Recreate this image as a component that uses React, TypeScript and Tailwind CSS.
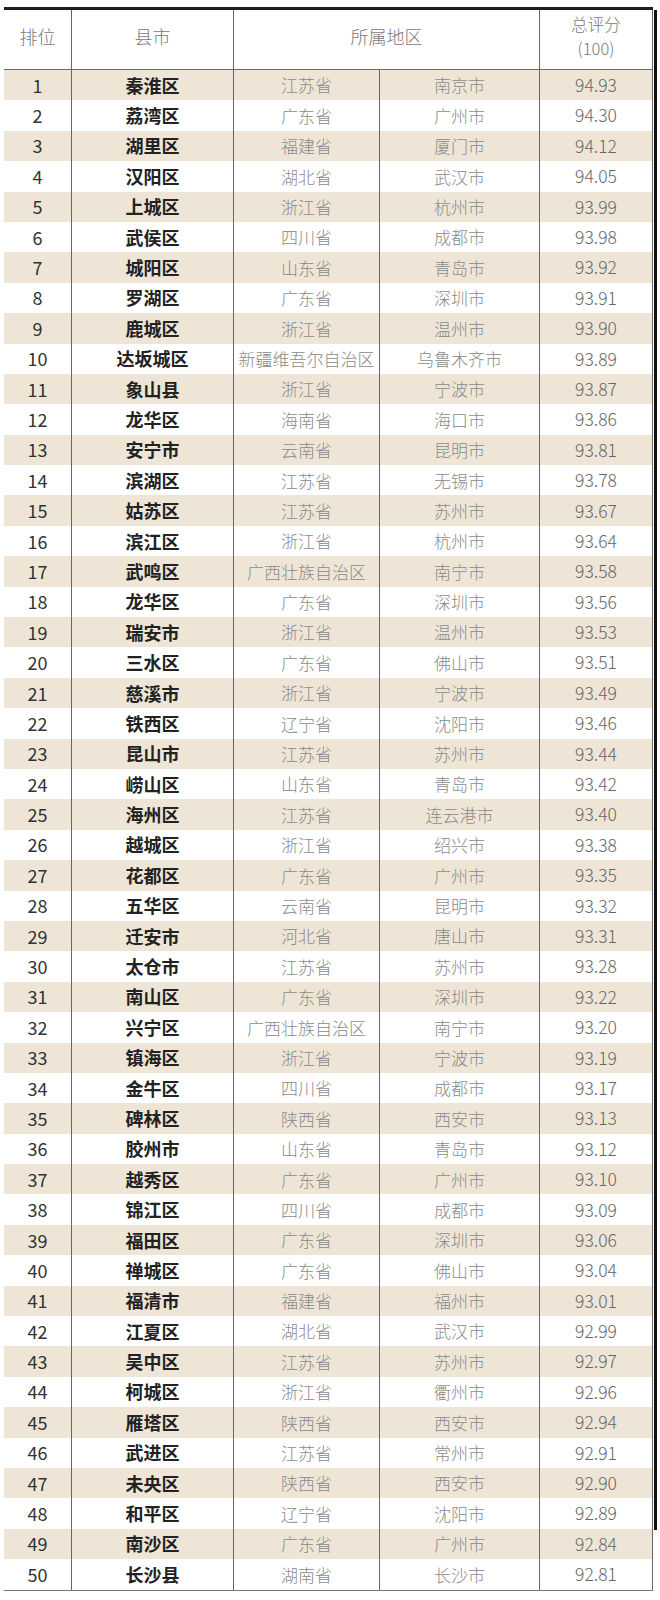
type Row = [number, string, string, string, string]

const rows: Row[] = [
  [1, '秦淮区', '江苏省', '南京市', '94.93'],
  [2, '荔湾区', '广东省', '广州市', '94.30'],
  [3, '湖里区', '福建省', '厦门市', '94.12'],
  [4, '汉阳区', '湖北省', '武汉市', '94.05'],
  [5, '上城区', '浙江省', '杭州市', '93.99'],
  [6, '武侯区', '四川省', '成都市', '93.98'],
  [7, '城阳区', '山东省', '青岛市', '93.92'],
  [8, '罗湖区', '广东省', '深圳市', '93.91'],
  [9, '鹿城区', '浙江省', '温州市', '93.90'],
  [10, '达坂城区', '新疆维吾尔自治区', '乌鲁木齐市', '93.89'],
  [11, '象山县', '浙江省', '宁波市', '93.87'],
  [12, '龙华区', '海南省', '海口市', '93.86'],
  [13, '安宁市', '云南省', '昆明市', '93.81'],
  [14, '滨湖区', '江苏省', '无锡市', '93.78'],
  [15, '姑苏区', '江苏省', '苏州市', '93.67'],
  [16, '滨江区', '浙江省', '杭州市', '93.64'],
  [17, '武鸣区', '广西壮族自治区', '南宁市', '93.58'],
  [18, '龙华区', '广东省', '深圳市', '93.56'],
  [19, '瑞安市', '浙江省', '温州市', '93.53'],
  [20, '三水区', '广东省', '佛山市', '93.51'],
  [21, '慈溪市', '浙江省', '宁波市', '93.49'],
  [22, '铁西区', '辽宁省', '沈阳市', '93.46'],
  [23, '昆山市', '江苏省', '苏州市', '93.44'],
  [24, '崂山区', '山东省', '青岛市', '93.42'],
  [25, '海州区', '江苏省', '连云港市', '93.40'],
  [26, '越城区', '浙江省', '绍兴市', '93.38'],
  [27, '花都区', '广东省', '广州市', '93.35'],
  [28, '五华区', '云南省', '昆明市', '93.32'],
  [29, '迁安市', '河北省', '唐山市', '93.31'],
  [30, '太仓市', '江苏省', '苏州市', '93.28'],
  [31, '南山区', '广东省', '深圳市', '93.22'],
  [32, '兴宁区', '广西壮族自治区', '南宁市', '93.20'],
  [33, '镇海区', '浙江省', '宁波市', '93.19'],
  [34, '金牛区', '四川省', '成都市', '93.17'],
  [35, '碑林区', '陕西省', '西安市', '93.13'],
  [36, '胶州市', '山东省', '青岛市', '93.12'],
  [37, '越秀区', '广东省', '广州市', '93.10'],
  [38, '锦江区', '四川省', '成都市', '93.09'],
  [39, '福田区', '广东省', '深圳市', '93.06'],
  [40, '禅城区', '广东省', '佛山市', '93.04'],
  [41, '福清市', '福建省', '福州市', '93.01'],
  [42, '江夏区', '湖北省', '武汉市', '92.99'],
  [43, '吴中区', '江苏省', '苏州市', '92.97'],
  [44, '柯城区', '浙江省', '衢州市', '92.96'],
  [45, '雁塔区', '陕西省', '西安市', '92.94'],
  [46, '武进区', '江苏省', '常州市', '92.91'],
  [47, '未央区', '陕西省', '西安市', '92.90'],
  [48, '和平区', '辽宁省', '沈阳市', '92.89'],
  [49, '南沙区', '广东省', '广州市', '92.84'],
  [50, '长沙县', '湖南省', '长沙市', '92.81'],
]

const cell = 'flex items-center justify-center whitespace-nowrap'

export default function App() {
  return (
    <div className="min-h-[1600px] bg-white pt-[7px] pl-[4px] font-['Noto_Sans_CJK_SC',sans-serif]">
      <div className="flex">
        <div className="w-[649px] border-t-[3px] border-[#1e1e1e]">
          {/* header */}
          <div className="flex h-[60px] border-b border-[#6e6b62] text-[18px] font-light text-[#787878]">
            <div className={`${cell} w-[67px] pb-[6px]`}>排位</div>
            <div className={`${cell} w-[162px] border-l border-[#666] pb-[6px]`}>县市</div>
            <div className={`${cell} w-[306px] border-l border-[#666] pb-[6px]`}>所属地区</div>
            <div className={`${cell} w-[114px] flex-col border-x border-[#666] pb-[8px] text-[16.5px] leading-[24px]`}>
              <span>总评分</span>
              <span>(100)</span>
            </div>
          </div>
          {rows.map(([rank, county, prov, city, score]) => (
            <div
              key={rank}
              className={`flex h-[30.4px] ${rank % 2 === 1 ? 'bg-[#eee5d6]' : 'bg-white'}`}
            >
              <div className={`${cell} w-[67px] text-[18px] text-[#333]`}>{rank}</div>
              <div className={`${cell} w-[162px] border-l border-[#666] text-[18px] font-bold text-[#222]`}>
                {county}
              </div>
              <div className={`${cell} w-[146px] border-l border-[#666] text-[17px] font-light text-[#8a8a8a]`}>
                {prov}
              </div>
              <div className={`${cell} w-[160px] border-l border-[#666] text-[17px] font-light text-[#8a8a8a]`}>
                {city}
              </div>
              <div className={`${cell} w-[114px] border-x border-[#666] text-[17.5px] font-light text-[#666]`}>
                {score}
              </div>
            </div>
          ))}
          <div className="border-t border-[#777]" />
        </div>
        <div className="ml-[1px] mt-[3px] h-[1520px] w-[3px] bg-[#111]" />
      </div>
    </div>
  )
}
